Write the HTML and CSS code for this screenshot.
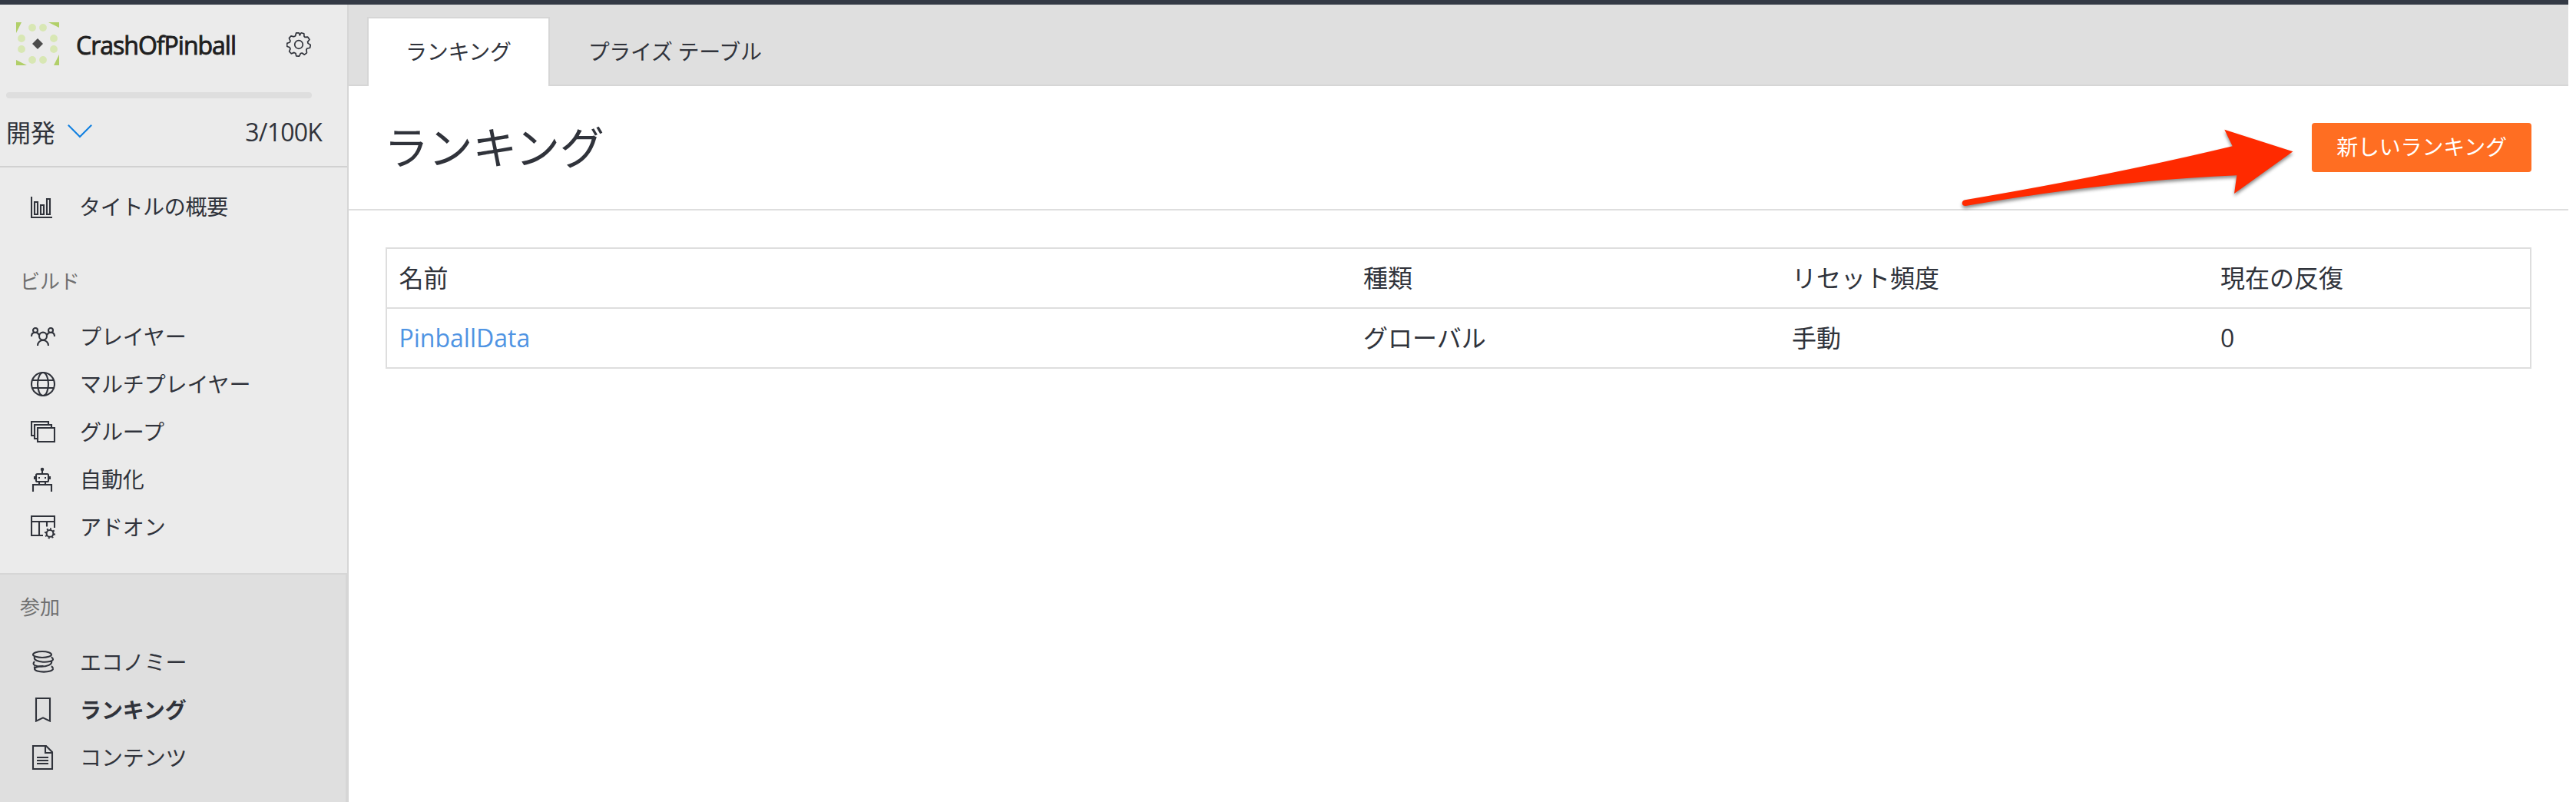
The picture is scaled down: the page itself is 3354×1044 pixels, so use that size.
FILE: index.html
```html
<!DOCTYPE html>
<html lang="ja">
<head>
<meta charset="utf-8">
<title>ランキング</title>
<link rel="stylesheet" href="styles.css">
</head>
<body>
<div class="topbar"></div>
<div class="app">
  <aside class="sidebar">
    <div class="studio">
      <svg class="avatar" viewBox="0 0 56 56">
        <g fill="#b1cf69"><path d="M0 0h7L0 14zM42 0h14v7zM56 42v14h-7zM0 49l14 7H0z"/></g>
        <g fill="#d8e7b4"><circle cx="21" cy="7" r="4.9"/><circle cx="35" cy="7" r="4.9"/><circle cx="7" cy="21" r="4.9"/><circle cx="7" cy="35" r="4.9"/><circle cx="49" cy="21" r="4.9"/><circle cx="49" cy="35" r="4.9"/><circle cx="21" cy="49" r="4.9"/><circle cx="35" cy="49" r="4.9"/></g>
        <path fill="#4c4c4c" d="M28 21l7 7-7 7-7-7z"/>
      </svg>
      <span class="studio-name">CrashOfPinball</span>
      <svg class="gear" viewBox="-16 -16 32 32" fill="none" stroke="#30333b" stroke-width="1.7" stroke-linejoin="round">
        <circle r="5.300"/>
        <path d="M1.400-12Q2-13.800 3.200-15.200L6.800-14.200Q6.900-12 7-10.600L8-9.600Q10-9.800 11.800-9.800L14-6.600Q12.800-5 11.600-3.600L12-1.600Q13.600-.6 15.300.4L14.600 4.200Q12.600 4.700 10.900 5L9.800 6.800Q10.300 8.800 10.400 10.800L7.400 13.200Q5.600 12 4.200 11L2.300 11.600Q1.600 13.400.6 15.200L-3.200 15Q-3.800 13-4 11.400L-6 10.400Q-7.800 11.200-9.600 11.800L-12.400 9Q-11.600 7-11 5.600L-11.900 3.600Q-13.800 3-15.400 2.200L-15.300-1.600Q-13.400-2.400-11.800-2.800L-11-4.800Q-12-6.600-12.600-8.400L-10-11.200Q-8-10.800-6.400-10.200L-4.400-11.200Q-4-13.200-3.400-15.100L.2-15.200Q1-13.600 1.400-12z"/>
      </svg>
    </div>
    <div class="usage-bar"></div>
    <div class="usage">
      <span class="stage">開発</span>
      <svg class="chevron" viewBox="0 0 32 18" fill="none" stroke="#0f7fe0" stroke-width="2"><path d="M.8.8L16 16 31.200.8"/></svg>
      <span class="quota">3/100K</span>
    </div>
    <nav class="group overview">
      <a class="item"><svg class="icon" viewBox="0 0 16 16"><path d="M.5 1v13.500h13.500M2.500 4.500h2v8h-2zM6.500 6.500h2v6h-2zM10.500 2.500h2v10h-2z"/></svg><span>タイトルの概要</span></a>
    </nav>
    <nav class="group build">
      <h2 class="group-title">ビルド</h2>
      <a class="item"><svg class="icon" viewBox="0 0 16 16"><circle cx="3" cy="4" r="1.500"/><circle cx="13" cy="4" r="1.500"/><circle cx="8" cy="7.800" r="2.500"/><path d="M.5 8c0-3.200 4-3.400 4.900-.9M15.500 8c0-3.200-4-3.400-4.900-.9M4.500 14c0-4.700 7-4.700 7 0"/></svg><span>プレイヤー</span></a>
      <a class="item"><svg class="icon" viewBox="0 0 16 16"><circle cx="8" cy="8" r="7.500"/><ellipse cx="8" cy="8" rx="3.500" ry="7.500"/><path d="M1 5.500h14M1 10.500h14"/></svg><span>マルチプレイヤー</span></a>
      <a class="item"><svg class="icon" viewBox="0 0 16 16"><path d="M4.500 5.500h11v9h-11zM4.500 12.500h-2v-9h11v2M2.500 10.500h-2v-9h11v2"/></svg><span>グループ</span></a>
      <a class="item"><svg class="icon" viewBox="0 0 16 16"><rect x="3.500" y="4.500" width="8" height="5" rx=".8"/><path d="M7.500 4.500V2M5.500 9.500v2M9.500 9.500v2M1.500 16v-4.500h12V16M2.500 6v2M12.500 6v2"/><circle cx="7.500" cy="1.500" r=".6"/><path d="M5 7h1M9 7h1"/></svg><span>自動化</span></a>
      <a class="item"><svg class="icon" viewBox="0 0 16 16"><path d="M8 13.500H.5V1h15v7.500M.5 4.500h15M5.500 4.500v9M10.500 4.500v3.300"/><circle cx="12.500" cy="12.200" r="2.200"/><path stroke-dasharray="1 1.356" d="M12.500 9.200a3 3 0 1 1-.01 0"/></svg><span>アドオン</span></a>
    </nav>
    <nav class="group engage">
      <h2 class="group-title">参加</h2>
      <a class="item"><svg class="icon" viewBox="0 0 16 16"><ellipse cx="7.500" cy="3" rx="6" ry="2"/><ellipse cx="8.500" cy="12.400" rx="6" ry="1.900" stroke-dasharray="19.500 8"/><path d="M2.500 4.500c-1.500 4.200 12 4.200 12 1.600 0-.6-.4-1-1.100-1.400M2.500 7.500c-4.400 4.600 12.500 4.400 11-.2M2.500 10.800c-.3.500 0 1 .3 1.500M13.400 10.600c.8.400 1.100.9 1.100 1.800"/></svg><span>エコノミー</span></a>
      <a class="item active"><svg class="icon" viewBox="0 0 16 16"><path d="M3.500.5h9v14.800L8 13.200l-4.500 2.100z"/></svg><span>ランキング</span></a>
      <a class="item"><svg class="icon" viewBox="0 0 16 16"><path d="M1.500.5h8.500l4 4v11h-12.500zM9.500.5v4.500h4.500M4 8h7.500M4 10h7.500M4 12h7.500"/></svg><span>コンテンツ</span></a>
    </nav>
  </aside>
  <main class="main">
    <div class="tabs">
      <a class="tab selected">ランキング</a>
      <a class="tab">プライズ テーブル</a>
    </div>
    <header class="page-header">
      <h1>ランキング</h1>
      <a class="button">新しいランキング</a>
    </header>
    <section class="content">
      <div class="table">
        <div class="row"><span>名前</span><span>種類</span><span>リセット頻度</span><span>現在の反復</span></div>
        <div class="row"><span><a class="link">PinballData</a></span><span>グローバル</span><span>手動</span><span>0</span></div>
      </div>
    </section>
  </main>
</div>
<svg class="arrow" viewBox="0 0 440 110"><path fill="#ff2a00" d="M8.500 100.300Q200 68 356.700 30.300L346.300 8.700 435.400 37.300 359 92 362.300 68.300Q200 75 9.500 108C3 108.500 3.500 101 8.500 100.300z"/></svg>
</body>
</html>
```
FILE: styles.css
```css
* { box-sizing: border-box; }
body {
  margin: 0;
  height: 1044px;
  overflow: hidden;
  display: flex;
  flex-direction: column;
  background: #fff;
  color: #30333b;
  font-family: "Open Sans", "Noto Sans CJK JP", sans-serif;
  font-size: 32px;
}
h1, h2 { margin: 0; font-weight: 400; }
.topbar { flex: none; width: 3344px; height: 6px; background: #343a45; }
.app { flex: 1; display: flex; width: 3344px; min-height: 0; }
.sidebar {
  flex: none;
  width: 454px;
  display: flex;
  flex-direction: column;
  background: #ebebeb;
  border-right: 2px solid #d6d6d6;
}
.studio { display: flex; align-items: flex-start; height: 114px; padding: 23px 0 0 21px; }
.avatar { width: 56px; height: 56px; }
.studio-name {
  width: 272px;
  margin-left: 22px;
  padding-top: 6px;
  line-height: 48px;
  letter-spacing: -1px;
  white-space: nowrap;
  color: #1f1f1f;
  -webkit-text-stroke: .9px #1f1f1f;
}
.gear { width: 32px; height: 32px; margin: 13px 0 0 2px; }
.usage-bar { width: 398px; height: 8px; margin-left: 8px; border-radius: 4px; background: #dedede; }
.usage {
  display: flex;
  align-items: center;
  height: 90px;
  padding: 0 33px 2px 8px;
  border-bottom: 2px solid #d1d1d1;
}
.stage { width: 80px; }
.chevron { width: 32px; height: 18px; }
.quota { margin-left: auto; letter-spacing: -.8px; }
.group { display: flex; flex-direction: column; }
.overview { height: 104px; padding-top: 21px; }
.build { height: 424px; padding-top: 21px; }
.engage {
  flex: 1;
  padding-top: 19px;
  background: #dfdfdf;
  border-top: 2px solid #d6d6d6;
  border-right: 2px solid #d6d6d6;
}
.group-title { height: 64px; padding-left: 26px; line-height: 46px; font-size: 26px; color: #707070; }
.item {
  flex: none;
  display: flex;
  align-items: center;
  height: 62px;
  padding-left: 40px;
  font-size: 28px;
  letter-spacing: -.1px;
  white-space: nowrap;
}
.item span { padding-bottom: 2px; }
.overview .item { letter-spacing: -.3px; }
.overview .item span { padding-bottom: 4px; }
.overview .icon { margin-right: 31px; }
.icon { width: 32px; height: 32px; margin-right: 32px; fill: none; stroke: #30333b; stroke-width: 1.05; }
.active { font-weight: 700; }
.main { flex: 1; display: flex; flex-direction: column; }
.tabs {
  display: flex;
  height: 106px;
  padding: 16px 0 0 24px;
  background: #dfdfdf;
  border-bottom: 2px solid #d6d6d6;
}
.tab {
  height: 88px;
  padding: 0 48px;
  border: 2px solid transparent;
  border-bottom: 0;
  line-height: 86px;
  font-size: 28px;
  letter-spacing: -.3px;
}
.selected { height: 90px; background: #fff; border-color: #d6d6d6; }
.page-header {
  display: flex;
  align-items: center;
  justify-content: space-between;
  height: 162px;
  padding: 0 48px 0 46px;
  border-bottom: 2px solid #dedede;
}
h1 { font-size: 58px; padding-bottom: 6px; letter-spacing: -.4px; }
.button {
  width: 286px;
  height: 64px;
  border-radius: 4px;
  background: #ff6e22;
  color: #fff;
  font-size: 28px;
  line-height: 62px;
  text-align: center;
  letter-spacing: -.2px;
}
.content { padding: 48px; }
.table { border: 2px solid #dedede; }
.row {
  display: grid;
  grid-template-columns: 45% 20% 20% 15%;
  height: 76px;
  line-height: 76px;
}
.row + .row { height: 78px; border-top: 2px solid #dedede; }
.row > span { padding-left: 15.500px; }
.link { color: #4f94e3; }
.arrow { position: absolute; left: 2550px; top: 160px; width: 440px; height: 110px; overflow: visible; filter: drop-shadow(0 3px 2px rgba(0,0,0,.45)); }
```
